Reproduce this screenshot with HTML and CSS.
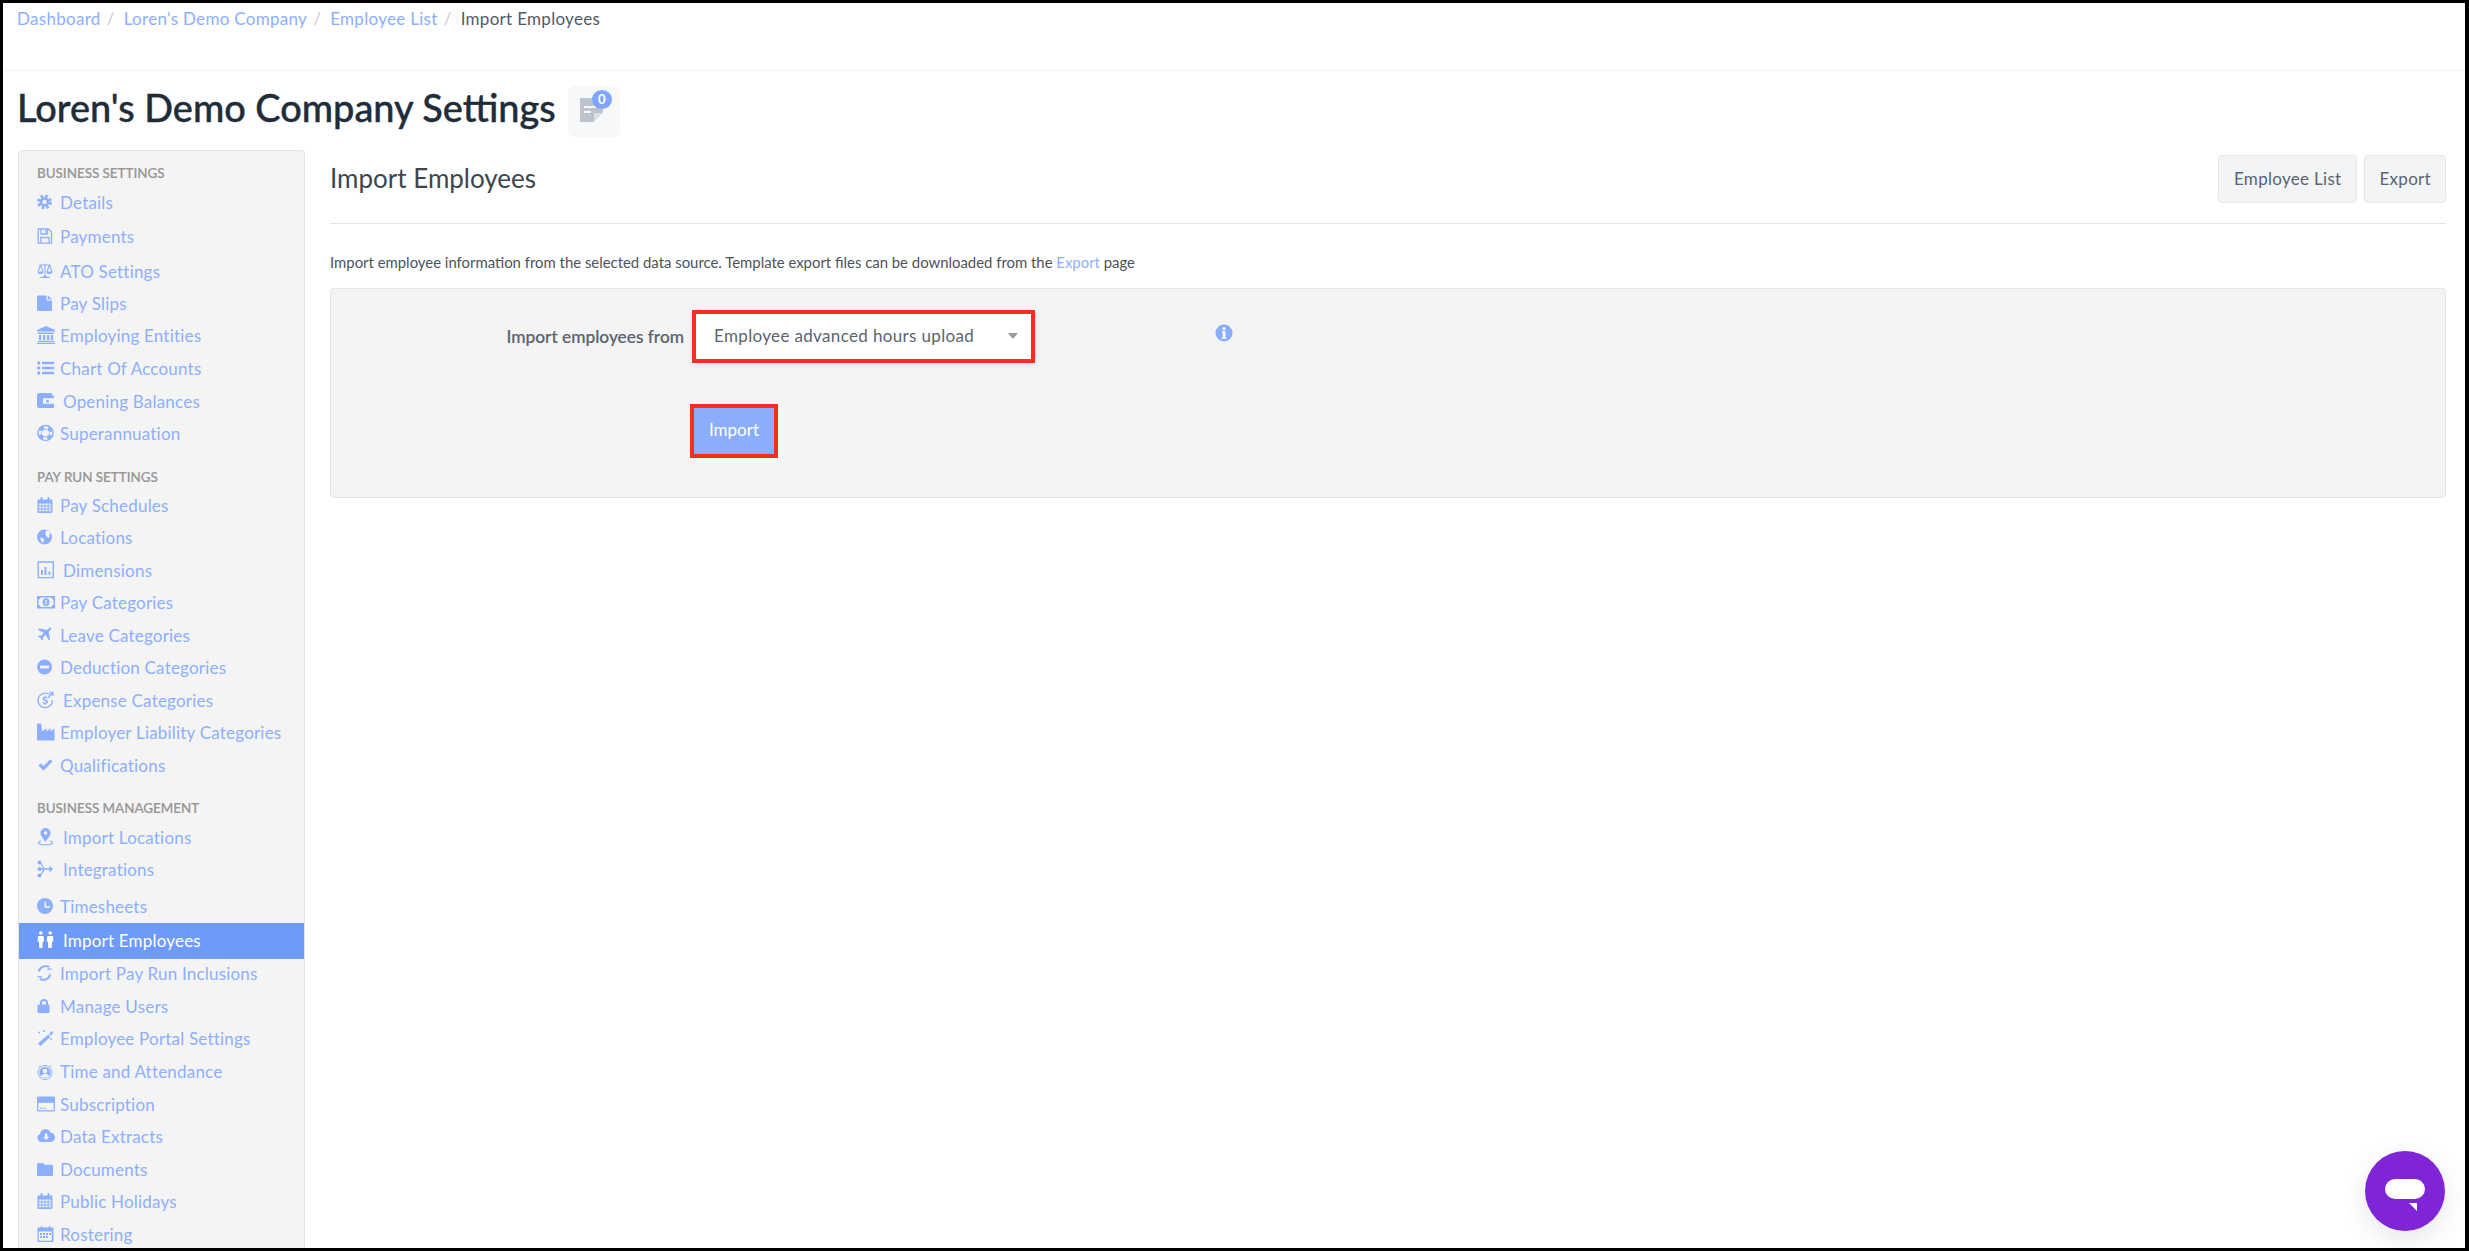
FILE: index.html
```html
<!DOCTYPE html>
<html lang="en">
<head>
<meta charset="utf-8">
<title>Import Employees</title>
<link rel="stylesheet" href="styles.css">
</head>
<body>
<svg class="defs" width="0" height="0" aria-hidden="true">
  <symbol id="i-cal" viewBox="0 0 18 18"><path d="M1.5 3.5h2V2a1 1 0 0 1 2 0v1.500h5V2a1 1 0 0 1 2 0v1.500h2a1 1 0 0 1 1 1V16a1 1 0 0 1-1 1H1.500a1 1 0 0 1-1-1V4.500a1 1 0 0 1 1-1z"/><path class="hole" d="M1.700 7h12.600v8.800H1.700zM4.800 7v8.800M8 7v8.800M11.200 7v8.800M1.700 10h12.600M1.700 13h12.600"/></symbol>
</svg>
<div class="frame">
  <nav class="crumbs">
    <a>Dashboard</a><span class="sep">/</span><a>Loren's Demo Company</a><span class="sep">/</span><a>Employee List</a><span class="sep">/</span><span class="here">Import Employees</span>
  </nav>
  <header class="title-row">
    <h1>Loren's Demo Company Settings</h1>
    <div class="note-btn">
      <svg width="26" height="26" viewBox="0 0 26 26"><path d="M2 1h21a1 1 0 0 1 1 1v13L14 25H2a1 1 0 0 1-1-1V2a1 1 0 0 1 1-1z" fill="#bcc3cf"/><path d="M5 10h12M5 15h7" stroke="#f7f8fa" stroke-width="2.200"/><path d="M15 25v-8a1 1 0 0 1 1-1h8z" fill="#dde1e7"/></svg>
      <span class="badge">0</span>
    </div>
  </header>
  <div class="main">
    <aside class="side">
      <div class="sec sec-first">BUSINESS SETTINGS</div>
      <a class="item"><svg class="ic" viewBox="0 0 18 18"><circle class="st" cx="7.500" cy="9" r="3.500" stroke-width="2.600"/><circle class="st" cx="7.500" cy="9" r="5.900" stroke-width="3" stroke-dasharray="2.600 2.030"/></svg>Details</a>
      <a class="item g2"><svg class="ic" viewBox="0 0 18 18"><path class="st" stroke-width="1.300" d="M1.200 2h10.300l3 3v11.200H1.200zM4 2v5h6.500V2M3.800 16v-5.500h8.300V16"/><path d="M8 3h1.500v3H8z"/></svg>Payments</a>
      <a class="item g3"><svg class="ic" viewBox="0 0 18 18"><path class="st" stroke-width="1.100" d="M8 1.500V15M3 15.500h10M2.500 3h11M3.500 3 1 9.500M3.500 3 6 9.500M12.500 3 10 9.500M12.500 3 15 9.500"/><path d="M.5 9.500h6a3 2.500 0 0 1-6 0zM9.500 9.500h6a3 2.500 0 0 1-6 0zM6 13.800h4V16H6z"/></svg>ATO Settings</a>
      <a class="item"><svg class="ic" viewBox="0 0 18 18"><path d="M1 1.500h8.500V6.500h5.500V16a1 1 0 0 1-1 1H1a1 1 0 0 1-1-1V2.500a1 1 0 0 1 1-1zM10.800 1.500 15 5.300h-4.200z"/></svg>Pay Slips</a>
      <a class="item"><svg class="ic" viewBox="0 0 18 18"><path d="M9 0 18 4v1.500H0V4zM1 6.500h16V8H1zM2 9h2.300v5H2zM6 9h2.300v5H6zM10 9h2.300v5H10zM13.800 9h2.300v5h-2.300zM1 14.800h16v1.300H1zM0 16.700h18V18H0z"/></svg><span>Employing Entities</span></a>
      <a class="item g1"><svg class="ic" viewBox="0 0 18 18"><circle cx="1.700" cy="4" r="1.700"/><circle cx="1.700" cy="9" r="1.700"/><circle cx="1.700" cy="14" r="1.700"/><path d="M5 2.700h12.300v2.500H5zM5 7.700h12.300v2.500H5zM5 12.700h12.300v2.500H5z"/></svg>Chart Of Accounts</a>
      <a class="item g1 wide"><svg class="ic" viewBox="0 0 18 18"><path d="M2.500 1H15v2.500h2V16H2.500A2.500 2.500 0 0 1 0 13.500v-10A2.500 2.500 0 0 1 2.500 1z"/><path class="cut" d="M6 6h11v6.500H6z"/><circle cx="10.500" cy="9.200" r="1.500"/><path d="M6 5h11v1.200H6zM6 11.800h11V13H6z"/></svg>Opening Balances</a>
      <a class="item"><svg class="ic" viewBox="0 0 18 18"><circle cx="8.500" cy="9" r="8.300"/><circle class="cut" cx="8.500" cy="9" r="3.600"/><circle class="cutarc" cx="8.500" cy="9" r="5.500" stroke-width="2.600" stroke-dasharray="4.200 4.440" stroke-dashoffset="2.100"/></svg>Superannuation</a>

      <div class="sec sec-run">PAY RUN SETTINGS</div>
      <a class="item"><svg class="ic"><use href="#i-cal"/></svg>Pay Schedules</a>
      <a class="item"><svg class="ic" viewBox="0 0 18 18"><circle cx="7.500" cy="9" r="7.500"/><path class="cut" d="M9 2.500c2 0 3.500 1 4.800 3L12 6.800l.8 2.200-1.800 1.300L9.500 8 8.200 6.500zM3 9.500l2.500.5 1.500 1.800-.5 2.400-1.500.2-1.200-2.400z"/></svg>Locations</a>
      <a class="item g1 wide"><svg class="ic" viewBox="0 0 18 18"><path class="st" stroke-width="1.400" d="M1.200 1h15.100v15.600H1.200z"/><path d="M4 9h2v5H4zM7.500 6h2v8h-2zM11.500 10.500h2V14h-2z"/></svg>Dimensions</a>
      <a class="item"><svg class="ic" viewBox="0 0 18 18"><path d="M0 3h18v12.500H0z"/><path class="cut" d="M3.500 4.500h11a2 2 0 0 0 2 2v5.500a2 2 0 0 0-2 2h-11a2 2 0 0 0-2-2V6.500a2 2 0 0 0 2-2z"/><ellipse cx="9" cy="9.200" rx="3.400" ry="4"/><path class="cut" d="M8.500 7h1.200v4.500H8.500z"/></svg>Pay Categories</a>
      <a class="item g1"><svg class="ic" viewBox="0 0 18 18"><path d="M13.500 1.200c.9.100 1 1 .6 2L11.600 6l1.500 7.300-1.200 1.200L8.500 8.800 5.800 11.500l.3 2.300-1 1L3.500 12 .8 10.500l1-1 2.200.3L6.900 7 1 3.700 2.200 2.500 9.700 4z"/></svg>Leave Categories</a>
      <a class="item"><svg class="ic" viewBox="0 0 18 18"><circle cx="7.500" cy="9" r="7.500"/><path class="cut" d="M3 7.600h9v2.800H3z"/></svg>Deduction Categories</a>
      <a class="item g1 wide"><svg class="ic" viewBox="0 0 18 18"><path class="st" stroke-width="1.300" d="M12.500 3.500A7.300 7.300 0 1 0 15.500 9"/><path class="st" stroke-width="1.300" d="M11 7 15.500 2M12.500 1.500h3.500V5"/><path d="M8.800 4.800v1.100c1 .1 1.700.5 2 1l-.8.900c-.4-.4-1-.7-1.700-.7-.7 0-1 .3-1 .7 0 1 3.800.6 3.800 3 0 1.100-.8 1.800-2.300 2v1.200H7.600v-1.200c-1-.1-1.900-.5-2.400-1.100l.8-1c.5.500 1.300.9 2.200.9.800 0 1.200-.3 1.200-.8 0-1.100-3.800-.7-3.800-3 0-1 .8-1.800 2.100-2V4.800z"/></svg>Expense Categories</a>
      <a class="item"><svg class="ic" viewBox="0 0 18 18"><path d="M0 .5h4.200l.8 8 4.500-3.300v3.300L13.500 5v3.500L17.500 5.500V17.500H0z"/></svg>Employer Liability Categories</a>
      <a class="item g1"><svg class="ic" viewBox="0 0 18 18"><path d="M6.500 14.500 1.500 9.500l2.200-2.200 2.800 2.800 6.800-6.800 2.200 2.200z"/></svg>Qualifications</a>

      <div class="sec sec-biz">BUSINESS MANAGEMENT</div>
      <a class="item wide"><svg class="ic" viewBox="0 0 18 18"><path d="M8.500 0a5 5 0 0 1 5 5c0 3-3 5.500-5 9-2-3.500-5-6-5-9a5 5 0 0 1 5-5z"/><circle class="cut" cx="8.500" cy="5" r="1.800"/><path class="st" stroke-width="1.100" d="M4 13c-4.500 1.200-3.200 3.800 4.500 3.800S17.500 14.200 13 13"/></svg>Import Locations</a>
      <a class="item wide"><svg class="ic" viewBox="0 0 18 18"><circle cx="2.500" cy="2.500" r="2"/><circle cx="2.500" cy="9" r="2"/><circle cx="2.500" cy="15.500" r="2"/><path class="st" stroke-width="1.300" d="M2.500 2.500C5 3 6 9 8 9M2.500 15.500C5 15 6 9 8 9M2.500 9H14"/><path d="M12.500 5.500 16 9l-3.500 3.500z"/></svg>Integrations</a>
      <a class="item g5"><svg class="ic" viewBox="0 0 18 18"><circle cx="8" cy="9" r="8"/><path class="cut" d="M7.500 4.500h1.600v4.800h4v1.500H7.500z"/></svg>Timesheets</a>
      <a class="item active wide"><svg class="ic" viewBox="0 0 18 18"><circle cx="3.800" cy="2" r="1.800"/><circle cx="13.200" cy="2" r="1.800"/><path d="M1 5h5.600l.4 5.500-1.300.3-.4 6.200H2.300l-.4-6.200-1.300-.3zM10.400 5H16l.4 5.500-1.300.3-.4 6.200h-3.400l-.4-6.200-1.300-.3z"/></svg>Import Employees</a>
      <a class="item"><svg class="ic" viewBox="0 0 18 18"><path d="M14.700 3.700 13.200 5.100A6 6 0 0 0 3 7.500H.6A8.300 8.300 0 0 1 12.900 2.300L14.700.5zM.4 14.300l1.500-1.400a6 6 0 0 0 10.100-2.400H14.400A8.300 8.300 0 0 1 2.200 15.700L.4 17.500zM14.700 5.800V.5L9.500 5.800zM.4 12.200v5.300l5.200-5.300z"/></svg>Import Pay Run Inclusions</a>
      <a class="item g1"><svg class="ic" viewBox="0 0 18 18"><path d="M3 7.500V6a4 4 0 0 1 8 0v1.500h.5a1 1 0 0 1 1 1V15a1 1 0 0 1-1 1H1.500a1 1 0 0 1-1-1V8.500a1 1 0 0 1 1-1zM5 7.500h4V6a2 2 0 0 0-4 0z"/></svg>Manage Users</a>
      <a class="item"><svg class="ic" viewBox="0 0 18 18"><path d="M12 4.500 15.500 2l1 1-2.300 3.700zM11.200 5.500l2.200 2.200-9.900 9.300-2.500-2.500z"/><path class="st" stroke-width=".900" d="M2 2.500v2M1 3.500h2M7 1v2M6 2h2M14 9v2M13 10h2"/></svg>Employee Portal Settings</a>
      <a class="item g1"><svg class="ic" viewBox="0 0 18 18"><circle class="st" stroke-width="1" cx="8" cy="10.500" r="7"/><circle cx="8" cy="10.500" r="5.600"/><circle class="cut" cx="8" cy="9" r="2.300"/><path class="cut" d="M3.800 14.500c.8-2 2.500-2.800 4.200-2.800s3.400.8 4.200 2.800C11 15.800 5 15.800 3.800 14.500z"/><path class="st" stroke-width="1" d="M1.500 5 3 3.500M13 3.500 14.500 5"/></svg>Time and Attendance</a>
      <a class="item g1"><svg class="ic" viewBox="0 0 18 18"><path d="M1.500 1.500h15a1.500 1.500 0 0 1 1.500 1.500v12a1.500 1.500 0 0 1-1.500 1.500h-15A1.500 1.500 0 0 1 0 15V3a1.500 1.500 0 0 1 1.500-1.500z"/><path class="cut" d="M1.300 7.800h15.400V15.200H1.300z"/><path d="M3 12.700h2.500v1H3zM6.500 12.700H9v1H6.500z"/></svg>Subscription</a>
      <a class="item"><svg class="ic" viewBox="0 0 18 18"><path d="M4.300 15A4.200 4.200 0 0 1 3 7 5.500 5.500 0 0 1 13.500 5.500 4.800 4.800 0 0 1 14 15z"/><path class="cut" d="M8 6.500h2.400v3.200h2L9.200 13 6 9.700h2z"/></svg>Data Extracts</a>
      <a class="item g1"><svg class="ic" viewBox="0 0 18 18"><path d="M1.500 3H6l1.500 1.800H14.500A1.500 1.500 0 0 1 16 6.300V14.500A1.500 1.500 0 0 1 14.500 16H1.500A1.500 1.500 0 0 1 0 14.500V4.500A1.500 1.500 0 0 1 1.500 3z"/></svg>Documents</a>
      <a class="item"><svg class="ic"><use href="#i-cal"/></svg>Public Holidays</a>
      <a class="item g1"><svg class="ic" viewBox="0 0 18 18"><path d="M1.500 2.500h2.300V1h1.400v1.500h6.600V1h1.400v1.500h2.300a1 1 0 0 1 1 1V16a1 1 0 0 1-1 1h-14a1 1 0 0 1-1-1V3.500a1 1 0 0 1 1-1z"/><path class="cut" d="M1.800 6.500h12.900v9.200H1.800z"/><path d="M3 8h2v2H3zM6 8h2v2H6zM9 8h2v2H9zM12 8h2v2h-2zM3 11h2v2H3zM6 11h2v2H6zM9 11h2v2H9z"/></svg>Rostering</a>
    </aside>
    <section class="content">
      <div class="head">
        <h2>Import Employees</h2>
        <div class="actions">
          <a class="btn">Employee List</a>
          <a class="btn btn-narrow">Export</a>
        </div>
      </div>
      <p class="desc">Import employee information from the selected data source. Template export files can be downloaded from the <a>Export</a> page</p>
      <div class="panel">
        <div class="row">
          <label class="lbl">Import employees from</label>
          <div class="select"><span>Employee advanced hours upload</span><i class="caret"></i></div>
          <svg class="info" width="18" height="18" viewBox="0 0 18 18"><circle cx="9" cy="9" r="8.500" fill="#8aadfc"/><circle cx="9" cy="4.700" r="1.600" fill="#fff"/><path d="M6.800 7.300h3.600v6h1v1.400H6.800v-1.400h1v-4.600h-1z" fill="#fff"/></svg>
        </div>
        <button class="import" type="button">Import</button>
      </div>
    </section>
  </div>
</div>
<button class="chat" type="button" aria-label="Chat"><i class="pill"></i><i class="tail"></i></button>
</body>
</html>
```
FILE: styles.css
```css
* { box-sizing: border-box; }
html, body { margin: 0; height: 100%; overflow: hidden; background: #fff; }
body { font-family: "Lato", "Liberation Sans", sans-serif; color: #4f5a66; }
.defs { position: absolute; }
.frame {
  height: 100vh;
  border: solid #000;
  border-width: 3px 4px 3px 3px;
  overflow: hidden;
  background: #fff;
}
.crumbs {
  height: 68px;
  border-bottom: 1px solid #f1f2f4;
  padding: 6px 0 0 14px;
  font-size: 17px;
  letter-spacing: .3px;
  line-height: 20px;
  color: #8cafff;
}
.crumbs .sep { color: #c9ced6; margin: 0 9px 0 6px; }
.crumbs .here { color: #4f5a66; }
.title-row {
  height: 79px;
  display: flex;
  align-items: flex-start;
  padding-left: 14px;
}
.title-row h1 {
  margin: 15px 0 0;
  font-size: 37.900px;
  line-height: 44px;
  font-weight: 500;
  color: #1f2d3a;
  -webkit-text-stroke: .4px #1f2d3a;
}
.note-btn {
  position: relative;
  width: 52px;
  height: 51px;
  margin: 15px 0 0 12px;
  background: #f7f8fa;
  border-radius: 7px;
  padding: 11px 0 0 11px;
}
.badge {
  position: absolute;
  left: 24px;
  top: 4px;
  width: 20px;
  height: 19px;
  border-radius: 50%;
  background: #7fa5fb;
  color: #fff;
  font-size: 13px;
  line-height: 19px;
  font-weight: 700;
  text-align: center;
}
.main { display: flex; padding: 0 19px 0 15px; }
.side {
  width: 287px;
  flex: none;
  height: 1200px;
  background: #f4f4f4;
  border: 1px solid #e4e4e4;
  border-radius: 4px 4px 0 0;
  padding-top: 12px;
}
.sec {
  height: 20px;
  line-height: 20px;
  padding-left: 18px;
  font-size: 13.400px;
  font-weight: 500;
  color: #969696;
  margin-bottom: 4px;
  -webkit-text-stroke: .2px #969696;
}
.sec-run { margin-top: 17px; margin-bottom: 3px; }
.sec-biz { margin-top: 16px; }
.item {
  display: flex;
  align-items: center;
  height: 32px;
  padding: 0 0 2px 18px;
  font-size: 17px;
  letter-spacing: .2px;
  color: #8cafff;
  white-space: nowrap;
}
.ic {
  width: 18px;
  height: 18px;
  margin-right: 5px;
  flex: none;
  fill: currentColor;
  overflow: visible;
}
.wide .ic { margin-right: 8px; }
.g1 { margin-top: 1px; }
.g2 { margin-top: 2px; }
.g3 { margin-top: 3px; }
.g5 { margin-top: 5px; }
.item.active {
  height: 36px;
  margin-bottom: -1px;
  background: #6e9bfa;
  color: #fff;
}
.st { fill: none; stroke: currentColor; }
.hole { fill: #f4f4f4; stroke: currentColor; stroke-width: 1; }
.cut { fill: #f4f4f4; }
.cutarc { fill: none; stroke: #f4f4f4; }
.content { flex: 1; margin-left: 25px; min-width: 0; }
.head {
  height: 74px;
  padding-top: 5px;
  border-bottom: 1px solid #e6e7ea;
  display: flex;
  justify-content: space-between;
  align-items: flex-start;
}
.head h2 {
  margin: 8px 0 0;
  font-size: 26px;
  line-height: 30px;
  font-weight: 400;
  color: #3d4650;
}
.actions { display: flex; gap: 7px; }
.btn {
  height: 48px;
  padding: 0 15px 2px;
  display: flex;
  align-items: center;
  background: #f3f4f6;
  border: 1px solid #e5e7eb;
  border-radius: 4px;
  font-size: 17px;
  letter-spacing: .3px;
  color: #5a6470;
}
.btn-narrow { padding: 0 14px 2px; }
.desc {
  margin: 28px 0 16px;
  font-size: 14.900px;
  line-height: 20px;
  color: #4a535d;
}
.desc a { color: #8cafff; }
.panel {
  height: 210px;
  background: #f4f4f4;
  border: 1px solid #e4e4e4;
  border-radius: 4px;
  padding-top: 21px;
}
.row { display: flex; align-items: flex-start; }
.lbl {
  width: 353px;
  height: 53px;
  line-height: 54px;
  text-align: right;
  font-size: 17.300px;
  font-weight: 500;
  color: #5a6470;
  margin-right: 8px;
  -webkit-text-stroke: .2px #5a6470;
}
.select {
  width: 343px;
  height: 53px;
  background: #fff;
  border: 4px solid #f32f23;
  display: flex;
  align-items: center;
  justify-content: space-between;
  padding: 0 13px 2px 18px;
  font-size: 17px;
  letter-spacing: .35px;
  color: #5a6470;
  box-shadow: 0 2px 6px rgba(120, 140, 170, .2);
}
.caret {
  width: 0;
  height: 0;
  border: solid transparent;
  border-width: 6px 5px 0;
  border-top-color: #999;
}
.info { margin: 14px 0 0 180px; }
.import {
  display: block;
  width: 88px;
  height: 54px;
  margin: 41px 0 0 359px;
  padding: 0 0 3px;
  background: #8aadfc;
  border: 4px solid #f32f23;
  color: #fff;
  font: 17px "Lato", "Liberation Sans", sans-serif;
}
.chat {
  position: fixed;
  left: 2365px;
  top: 1151px;
  width: 80px;
  height: 80px;
  padding: 0;
  border: 0;
  border-radius: 50%;
  background: #7f24d6;
  box-shadow: 0 8px 24px rgba(60, 80, 100, .14);
}
.pill {
  position: absolute;
  left: 20px;
  top: 28px;
  width: 40px;
  height: 20px;
  border-radius: 10px;
  background: #fff;
}
.tail {
  position: absolute;
  left: 44px;
  top: 52px;
  width: 8px;
  height: 8px;
  background: #fff;
  clip-path: polygon(0 0, 100% 0, 100% 100%);
}
```
